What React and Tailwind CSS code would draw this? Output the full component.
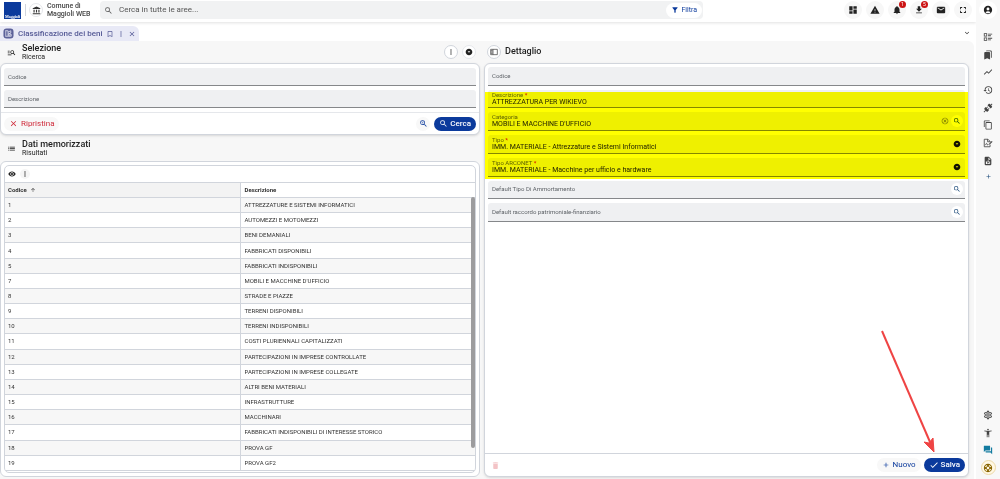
import { useState } from "react"
import {
  MdAccessibilityNew,
  MdAccountBalance,
  MdAccountCircle,
  MdAdd,
  MdArrowDropDownCircle,
  MdArrowUpward,
  MdBookmarkBorder,
  MdBookmarks,
  MdCheck,
  MdClose,
  MdContentCopy,
  MdDashboard,
  MdDelete,
  MdEmail,
  MdExpandMore,
  MdFileDownload,
  MdFilterAlt,
  MdForum,
  MdFullscreen,
  MdHistory,
  MdList,
  MdManageSearch,
  MdMoreVert,
  MdNotifications,
  MdOutlineCancel,
  MdOutlineSettings,
  MdOutlineSupport,
  MdSearch,
  MdShowChart,
  MdVisibility,
  MdWarning,
  MdZoomIn,
} from "react-icons/md"

const rows = [
  ["1", "ATTREZZATURE E SISTEMI INFORMATICI"],
  ["2", "AUTOMEZZI E MOTOMEZZI"],
  ["3", "BENI DEMANIALI"],
  ["4", "FABBRICATI DISPONIBILI"],
  ["5", "FABBRICATI INDISPONIBILI"],
  ["7", "MOBILI E MACCHINE D'UFFICIO"],
  ["8", "STRADE E PIAZZE"],
  ["9", "TERRENI DISPONIBILI"],
  ["10", "TERRENI INDISPONIBILI"],
  ["11", "COSTI PLURIENNALI CAPITALIZZATI"],
  ["12", "PARTECIPAZIONI IN IMPRESE CONTROLLATE"],
  ["13", "PARTECIPAZIONI IN IMPRESE COLLEGATE"],
  ["14", "ALTRI BENI MATERIALI"],
  ["15", "INFRASTRUTTURE"],
  ["16", "MACCHINARI"],
  ["17", "FABBRICATI INDISPONIBILI DI INTERESSE STORICO"],
  ["18", "PROVA GF"],
  ["19", "PROVA GF2"],
]

const svgProps = { viewBox: "0 0 24 24", width: "1em", height: "1em", fill: "currentColor", "aria-hidden": true }

const BallotIcon = () => (
  <svg {...svgProps}>
    <path d="M2 3h8v8H2zm2 2v4h4V5zM2 13h8v8H2zm2 2v4h4v-4zM12 4h10v2H12zm0 4h7v2h-7zm0 6h10v2H12zm0 4h7v2h-7z" fillRule="evenodd" />
  </svg>
)

const ConnectionIcon = () => (
  <svg {...svgProps}>
    <path d="M21.4 7.5c.8.8.8 2.1 0 2.8l-2.8 2.8-7.8-7.8 2.8-2.8c.8-.8 2.1-.8 2.8 0l1.8 1.8 3-3 1.4 1.4-3 3 1.8 1.8M15.6 13.3l-1.4-1.4-2.8 2.8-2.1-2.1 2.8-2.8-1.4-1.4-2.8 2.8-1.5-1.4-2.8 2.8c-.8.8-.8 2.1 0 2.8l1.8 1.8-4 4 1.4 1.4 4-4 1.8 1.8c.8.8 2.1.8 2.8 0l2.8-2.8-1.4-1.4 2.8-2.9z" />
  </svg>
)

const FileSignIcon = () => (
  <svg {...svgProps} fill="none" stroke="currentColor" strokeWidth="2">
    <path d="M17 16v5H3V3h9l5 5v2M11 3v6h6M6 17c2-5 3-5 4-2s2 2 3 0" />
    <path d="M14 16l1-3 6-6 2 2-6 6z" fill="currentColor" stroke="none" />
  </svg>
)

const FileChartIcon = () => (
  <svg {...svgProps}>
    <path d="M6 2h8l6 6v12a2 2 0 0 1-2 2H6a2 2 0 0 1-2-2V4a2 2 0 0 1 2-2zm7 1.500V9h5.500zM7 13v6h3v-6zm4-2v3h3v-3zm0 5v3h3v-3zm4-3v6h2v-6z" fillRule="evenodd" />
  </svg>
)

const PanelIcon = () => (
  <svg {...svgProps} fill="none" stroke="currentColor" strokeWidth="2">
    <path d="M2 4h20v16H2zM9 4v16M3 8h5M3 12h5M3 16h5" />
  </svg>
)

const TabIcon = () => (
  <svg viewBox="0 0 24 24" className="size-[11px] shrink-0" aria-hidden="true">
    <rect x="1" y="1" width="22" height="22" rx="7" fill="#5c6199" />
    <g fill="none" stroke="#e8e9f5" strokeWidth="1.600">
      <path d="M6 5v14M6 6h5v12H6M11 9l6-3v5l-6 2M14 12l4 2v4h-7" />
      <circle cx="14" cy="15" r="2" />
    </g>
  </svg>
)

const IconButton = ({ label, size = "size-[18px]", className = "", children }) => (
  <button aria-label={label} className={`relative flex shrink-0 items-center justify-center rounded-full ${size} ${className}`}>
    {children}
  </button>
)

const Badge = ({ count }) => (
  <span className="absolute top-0 right-0 flex size-[7px] items-center justify-center rounded-full bg-[#cc1414] text-[5px] leading-[5px] text-white">
    {count}
  </span>
)

const Field = ({ id, label, value, required, select, icons }) => {
  const [text, setText] = useState(value || "")
  const filled = text !== ""
  const control = "h-[9px] w-full min-w-0 bg-transparent text-[7px] leading-[9px] text-[#222] outline-none"

  return (
    <div className="flex h-full min-h-[18px] items-center rounded-t-[3px] border-b border-[#85878a] bg-[#eff0f2] pr-[2px] pl-1">
      <div className={filled ? "flex min-w-0 flex-1 flex-col" : "grid min-w-0 flex-1 items-center"}>
        <label
          htmlFor={id}
          className={`text-[6px] text-[#5f6368] ${filled ? "h-[7px] leading-[7px]" : "col-start-1 row-start-1 leading-[8px]"}`}
        >
          {label}
          {required && <span className="font-bold text-[#d81b1b]"> *</span>}
        </label>
        {select ? (
          <select id={id} value={text} onChange={(e) => setText(e.target.value)} className={`${control} appearance-none`}>
            <option>{value}</option>
          </select>
        ) : (
          <input
            id={id}
            value={text}
            onChange={(e) => setText(e.target.value)}
            className={`${control} ${filled ? "" : "col-start-1 row-start-1"}`}
          />
        )}
      </div>
      {icons}
    </div>
  )
}

const SectionTitle = ({ icon, title, subtitle, children }) => (
  <div className="flex items-center gap-[6px] px-[7px] text-[#222]">
    <span className="text-[9px]">{icon}</span>
    <div className="flex-1">
      <h2 className="text-[9px] leading-[9px] font-medium">{title}</h2>
      <p className="text-[7px] leading-[8px]">{subtitle}</p>
    </div>
    {children}
  </div>
)

const searchButton = (
  <IconButton label="Cerca valore" size="size-[12px]" className="bg-white text-[8px] text-[#1c4a7a]">
    <MdSearch />
  </IconButton>
)

const dropdownIcon = (
  <span className="flex w-[12px] justify-center text-[8px] text-[#111]">
    <MdArrowDropDownCircle />
  </span>
)

const TopBar = () => (
  <header className="flex h-[22px] shrink-0 items-center bg-white pb-[2px] pl-1 shadow-[0_1px_3px_rgba(0,0,0,0.12)]">
    <div className="flex size-[17px] flex-col justify-end overflow-hidden bg-[#0b3a9c] text-center font-['Liberation_Serif',serif] text-[4px] leading-[5px] font-bold text-white">
      Maggioli
    </div>
    <span className="ml-1 h-3 w-px bg-gray-300" />
    <span className="ml-[3px] flex size-[14px] items-center justify-center rounded-full border border-gray-200 text-[9px] text-[#333]">
      <MdAccountBalance />
    </span>
    <p className="ml-1 w-[53px] text-[7px] leading-[8px] font-medium whitespace-nowrap text-[#444]">
      Comune di
      <br />
      Maggioli WEB
    </p>
    <div className="flex h-[18px] max-w-[603px] flex-1 items-center rounded-[4px] bg-[#f1f2f3] px-1">
      <MdSearch className="text-[9px] text-[#555]" />
      <input
        aria-label="Cerca"
        placeholder="Cerca in tutte le aree..."
        className="ml-[6px] min-w-0 flex-1 bg-transparent text-[8px] outline-none placeholder:text-[#555]"
      />
      <button className="-mr-[3px] flex h-[15px] items-center gap-[2px] rounded-full bg-white px-[5px] text-[7px] text-[#0b3a9c]">
        <MdFilterAlt className="text-[8px]" />
        Filtra
      </button>
    </div>
    <div className="ml-auto flex gap-1 pr-1 text-[10px] text-[#222]">
      <IconButton label="Dashboard" className="bg-[#f7f7f7]"><MdDashboard /></IconButton>
      <IconButton label="Avvisi" className="bg-[#f7f7f7]"><MdWarning /></IconButton>
      <IconButton label="Notifiche" className="bg-[#f7f7f7]"><MdNotifications /><Badge count={1} /></IconButton>
      <IconButton label="Download" className="bg-[#f7f7f7]"><MdFileDownload /><Badge count={5} /></IconButton>
      <IconButton label="Messaggi" className="bg-[#f7f7f7]"><MdEmail /></IconButton>
      <IconButton label="Schermo intero" className="bg-[#f7f7f7]"><MdFullscreen /></IconButton>
    </div>
  </header>
)

const SideBar = () => (
  <aside className="flex w-6 shrink-0 flex-col items-center justify-between bg-[#f8f8f8] pt-px pb-1 text-[10px] text-[#444]">
    <nav className="flex flex-col items-center">
      <IconButton label="Profilo" className="mb-[9px] bg-white text-[#222]"><MdAccountCircle /></IconButton>
      <IconButton label="Elenco"><BallotIcon /></IconButton>
      <IconButton label="Segnalibri" size="h-[17px] w-[18px]"><MdBookmarks /></IconButton>
      <IconButton label="Andamento"><MdShowChart /></IconButton>
      <IconButton label="Cronologia"><MdHistory /></IconButton>
      <IconButton label="Connessioni" size="h-[17px] w-[18px]"><ConnectionIcon /></IconButton>
      <IconButton label="Copia"><MdContentCopy /></IconButton>
      <IconButton label="Firma"><FileSignIcon /></IconButton>
      <IconButton label="Report" size="h-[17px] w-[18px]"><FileChartIcon /></IconButton>
      <IconButton label="Aggiungi" size="h-[14px] w-[18px]" className="text-[7px] text-[#1c4a7a]"><MdAdd /></IconButton>
    </nav>
    <nav className="flex flex-col items-center">
      <IconButton label="Impostazioni"><MdOutlineSettings /></IconButton>
      <IconButton label="Accessibilità" size="h-[17px] w-[18px]"><MdAccessibilityNew /></IconButton>
      <IconButton label="Chat" className="text-[#137ba0]"><MdForum /></IconButton>
      <IconButton label="Supporto" size="size-[15px]" className="mt-px border border-[#ecd9a8] bg-[#fff8e4] text-[#8a6500]">
        <MdOutlineSupport />
      </IconButton>
    </nav>
  </aside>
)

const SearchCard = () => (
  <section className="rounded-[6px] border border-gray-300 bg-white shadow-sm">
    <div className="grid gap-1 px-[3px] py-1">
      <Field id="s-codice" label="Codice" />
      <Field id="s-descrizione" label="Descrizione" />
    </div>
    <div className="flex h-[22px] items-center gap-1 border-t border-gray-200 px-[3px] text-[8px]">
      <button className="flex h-[14px] items-center gap-[3px] rounded-full bg-[#f8f8f8] px-[5px] text-[#cf2a3a]">
        <MdClose className="text-[9px]" />
        Ripristina
      </button>
      <IconButton label="Ricerca avanzata" size="size-[14px]" className="ml-auto bg-[#f8f8f8] text-[9px] text-[#0b3a9c]">
        <MdZoomIn />
      </IconButton>
      <button className="flex h-[14px] items-center gap-[2px] rounded-full bg-[#0b3a9c] px-[5px] font-medium text-white">
        <MdSearch className="text-[9px]" />
        Cerca
      </button>
    </div>
  </section>
)

const ResultsCard = () => (
  <section className="flex min-h-0 flex-1 flex-col rounded-[6px] border border-gray-300 bg-white p-[3px]">
    <div className="relative flex min-h-0 flex-1 flex-col overflow-hidden rounded-[5px] border border-gray-300">
      <div className="flex h-4 shrink-0 items-center gap-1 px-[3px] text-[8px] text-[#222]">
        <button aria-label="Visualizza" className="flex"><MdVisibility /></button>
        <IconButton label="Opzioni" size="size-[10px]" className="bg-[#f5f5f5]"><MdMoreVert /></IconButton>
      </div>
      <table className="h-[289px] w-full shrink-0 table-fixed border-collapse text-left text-[6px] leading-[8px] text-[#333]">
        <thead>
          <tr className="h-[15px] border-y border-gray-300">
            <th className="w-1/2 border-r border-gray-300 bg-[#f3f3f3] px-[3px] font-bold">
              <span className="flex items-center gap-[3px]">
                Codice
                <MdArrowUpward className="text-[6px]" />
              </span>
            </th>
            <th className="px-1 font-bold">Descrizione</th>
          </tr>
        </thead>
        <tbody>
          {rows.map(([code, description]) => (
            <tr key={code} className="border-b border-gray-300 odd:bg-[#f7f7f7]">
              <td className="border-r border-gray-300 px-[3px]">{code}</td>
              <td className="px-1">{description}</td>
            </tr>
          ))}
        </tbody>
      </table>
      <div className="absolute top-[31px] right-0 bottom-[24px] w-[4px] rounded-full bg-[#9c9c9e]" />
    </div>
  </section>
)

const DetailCard = () => (
  <section className="relative flex min-h-0 flex-1 flex-col rounded-[6px] border border-gray-300 bg-white shadow-sm">
    <div className="grid h-[162px] grid-rows-7 gap-1 px-[3px] pt-[3px] pb-1">
      <Field id="codice" label="Codice" />
      <Field id="descrizione" label="Descrizione" value="ATTREZZATURA PER WIKIEVO" required />
      <Field
        id="categoria"
        label="Categoria"
        value="MOBILI E MACCHINE D'UFFICIO"
        icons={
          <>
            <button aria-label="Svuota" className="flex size-[13px] items-center justify-center text-[8px] text-[#777]">
              <MdOutlineCancel />
            </button>
            {searchButton}
          </>
        }
      />
      <Field id="tipo" label="Tipo" value="IMM. MATERIALE - Attrezzature e Sistemi Informatici" required select icons={dropdownIcon} />
      <Field id="arconet" label="Tipo ARCONET" value="IMM. MATERIALE - Macchine per ufficio e hardware" required select icons={dropdownIcon} />
      <Field id="ammortamento" label="Default Tipo Di Ammortamento" icons={searchButton} />
      <Field id="raccordo" label="Default raccordo patrimoniale-finanziario" icons={searchButton} />
    </div>
    <div className="pointer-events-none absolute top-[28px] right-0 left-0 h-[87px] bg-[#ffff00] mix-blend-multiply" />
    <div className="mt-auto flex h-[23px] items-center gap-[3px] border-t border-gray-300 px-[3px] text-[8px]">
      <IconButton label="Elimina" size="size-[14px]" className="mr-auto text-[9px] text-[#f3c3c6]"><MdDelete /></IconButton>
      <button className="flex h-[14px] items-center gap-[3px] rounded-full bg-[#f8f8f8] px-[5px] text-[#0b3a9c]">
        <MdAdd className="text-[8px]" />
        Nuovo
      </button>
      <button className="flex h-[14px] items-center gap-[2px] rounded-full bg-[#0b3a9c] px-[5px] font-medium text-white">
        <MdCheck className="text-[10px]" />
        Salva
      </button>
    </div>
    <svg className="pointer-events-none absolute right-[32px] bottom-[23px] h-[124px] w-[56px]" viewBox="0 0 56 124" aria-hidden="true">
      <path d="M2 2L50 113" stroke="#ef4444" strokeWidth="2" />
      <path d="M54 123L44 113L49 114L53 109Z" fill="#ef4444" stroke="#ef4444" />
    </svg>
  </section>
)

const App = () => {
  return (
    <div className="flex h-screen overflow-hidden bg-white font-[Roboto,sans-serif]">
      <div className="flex min-w-0 flex-1 flex-col">
        <TopBar />
        <div className="flex h-[19px] shrink-0 items-end">
          <div className="flex h-[15px] items-center gap-1 rounded-tr-[6px] bg-[#e8e9f6] px-[3px] text-[#555a96]">
            <TabIcon />
            <span className="text-[8px] font-medium">Classificazione dei beni</span>
            <span className="flex items-center gap-[3px] text-[8px]">
              <button aria-label="Segnalibro"><MdBookmarkBorder /></button>
              <button aria-label="Opzioni scheda"><MdMoreVert /></button>
              <button aria-label="Chiudi scheda"><MdClose /></button>
            </span>
          </div>
          <button aria-label="Mostra schede" className="mr-[5px] mb-1 ml-auto text-[8px] text-[#222]"><MdExpandMore /></button>
        </div>
        <main className="mr-[2px] grid min-h-0 flex-1 grid-cols-[480fr_485fr] gap-1 rounded-tr-[6px] bg-[#f7f7f7] pr-[5px] pb-[2px]">
          <div className="flex min-h-0 min-w-0 flex-col">
            <div className="flex h-[22px] shrink-0 flex-col justify-center">
              <SectionTitle icon={<MdManageSearch />} title="Selezione" subtitle="Ricerca">
                <div className="-mr-[3px] flex gap-1 text-[8px]">
                  <IconButton label="Altre azioni" size="size-[14px]" className="border border-gray-300 bg-white"><MdMoreVert /></IconButton>
                  <IconButton label="Comprimi" size="size-[14px]" className="border border-gray-200 bg-white"><MdArrowDropDownCircle /></IconButton>
                </div>
              </SectionTitle>
            </div>
            <SearchCard />
            <div className="flex h-[26px] shrink-0 flex-col justify-center">
              <SectionTitle icon={<MdList />} title="Dati memorizzati" subtitle="Risultati" />
            </div>
            <ResultsCard />
          </div>
          <div className="flex min-h-0 min-w-0 flex-col">
            <div className="flex h-[22px] shrink-0 items-center gap-1 px-[3px]">
              <IconButton label="Pannello" size="size-[14px]" className="border border-gray-300 bg-white text-[8px] text-[#333]"><PanelIcon /></IconButton>
              <h2 className="text-[9px] font-medium text-[#222]">Dettaglio</h2>
            </div>
            <DetailCard />
          </div>
        </main>
      </div>
      <SideBar />
    </div>
  )
}

export default App
